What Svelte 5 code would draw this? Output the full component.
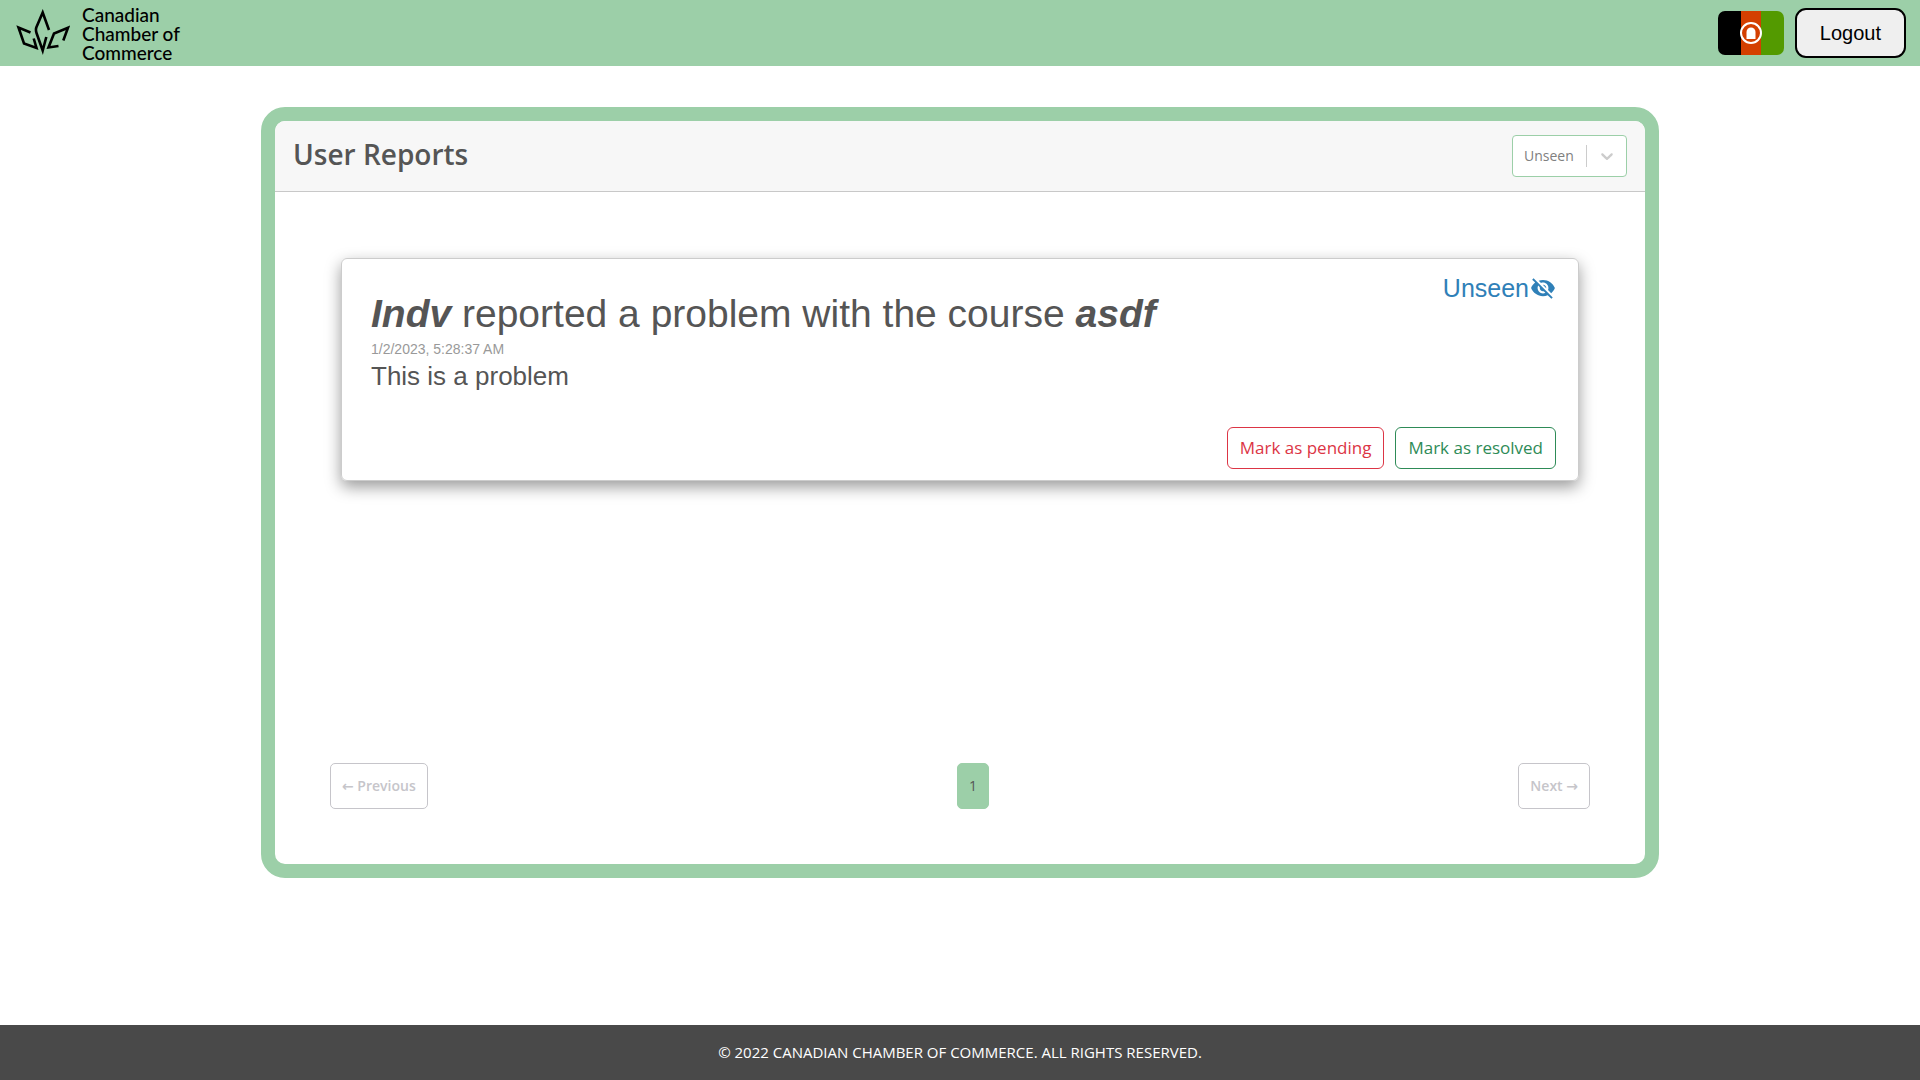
<script lang="ts">
  type Status = 'Unseen' | 'Pending' | 'Resolved';

  let filter = $state<Status>('Unseen');
  let page = $state(1);

  const statuses: Status[] = ['Unseen', 'Pending', 'Resolved'];
  const pages = [1];
  const report = {
    user: 'Indv',
    course: 'asdf',
    date: '1/2/2023, 5:28:37 AM',
    message: 'This is a problem',
    status: 'Unseen'
  };
</script>

<div class="app">
  <header class="topbar">
    <a class="brand" href="/">
      <svg class="leaf" viewBox="0 0 54 48" aria-hidden="true">
        <path d="M33 21 26.700 3.500 20.300 18.500Q19.500 21 20.500 24L26.700 41.500 30.300 28" />
        <path d="M14.500 23.500 2.500 18.500 8 34.500 20.500 39 17.700 29.500" />
        <path d="M47.300 31.500 52 18.700 38 24.500 32.500 38.500 42.500 37" />
      </svg>
      <span class="brand-name">Canadian<br />Chamber of<br />Commerce</span>
    </a>
    <div class="actions">
      <button class="language" type="button" aria-label="Language">
        <svg viewBox="0 0 66 44" aria-hidden="true">
          <path fill="#000" d="M0 0h23v44H0z" />
          <path fill="#d43f00" d="M23 0h20v44H23z" />
          <path fill="#539a00" d="M43 0h23v44H43z" />
          <circle cx="33" cy="22" r="10" fill="none" stroke="#fff" stroke-width="2" />
          <path fill="#fff" d="M28.500 28v-7a4.500 4.500 0 0 1 9 0v7z" />
        </svg>
      </button>
      <button class="logout" type="button">Logout</button>
    </div>
  </header>

  <main>
    <section class="panel">
      <div class="panel-head">
        <h1>User Reports</h1>
        <div class="filter">
          <select bind:value={filter} aria-label="Report status">
            {#each statuses as status}
              <option value={status}>{status}</option>
            {/each}
          </select>
          <span class="indicator" aria-hidden="true">
            <svg viewBox="0 0 20 20"><path d="M4.516 7.548c0.436-0.446 1.043-0.481 1.576 0l3.908 3.747 3.908-3.747c0.533-0.481 1.141-0.446 1.574 0 0.436 0.445 0.408 1.197 0 1.615-0.406 0.418-4.695 4.502-4.695 4.502-0.217 0.223-0.502 0.335-0.787 0.335s-0.570-0.112-0.789-0.335c0 0-4.287-4.084-4.695-4.502s-0.436-1.170 0-1.615z" /></svg>
          </span>
        </div>
      </div>

      <div class="panel-body">
        <article class="report">
          <div class="report-text">
            <h2><b>{report.user}</b> reported a problem with the course <b>{report.course}</b></h2>
            <time>{report.date}</time>
            <p>{report.message}</p>
          </div>
          <div class="status">
            <span>{report.status}</span>
            <svg viewBox="0 0 24 24" aria-hidden="true"><path d="M12 7c2.760 0 5 2.240 5 5 0 .65-.13 1.260-.36 1.830l2.920 2.920c1.510-1.260 2.700-2.890 3.430-4.750-1.730-4.390-6-7.500-11-7.500-1.400 0-2.740.25-3.980.7l2.160 2.160C10.740 7.130 11.350 7 12 7zM2 4.270l2.280 2.280.46.46C3.080 8.300 1.780 10.020 1 12c1.730 4.390 6 7.500 11 7.500 1.550 0 3.030-.3 4.380-.84l.42.42L19.730 22 21 20.730 3.270 3 2 4.270zM7.530 9.800l1.550 1.550c-.05.21-.08.43-.08.65 0 1.660 1.340 3 3 3 .22 0 .44-.03.65-.08l1.550 1.550c-.67.33-1.410.53-2.200.53-2.760 0-5-2.240-5-5 0-.79.2-1.530.53-2.200zm4.310-.78l3.150 3.150.02-.16c0-1.660-1.340-3-3-3l-.17.01z" /></svg>
          </div>
          <div class="report-actions">
            <button class="pending" type="button">Mark as pending</button>
            <button class="resolved" type="button">Mark as resolved</button>
          </div>
        </article>

        <nav class="pagination" aria-label="Pages">
          <button class="step" type="button" disabled><span class="arrow">←</span> Previous</button>
          <div class="pages">
            {#each pages as n}
              <button class="page" class:current={n === page} type="button" onclick={() => (page = n)}>{n}</button>
            {/each}
          </div>
          <button class="step" type="button" disabled>Next <span class="arrow">→</span></button>
        </nav>
      </div>
    </section>
  </main>

  <footer>© 2022 CANADIAN CHAMBER OF COMMERCE. ALL RIGHTS RESERVED.</footer>
</div>

<style>
  :global(body) {
    margin: 0;
    background: #fff;
  }

  .app {
    --green: #9ccfa8;
    --sans: 'Segoe UI', 'Open Sans', 'Noto Sans', sans-serif;
    --arial: Arial, 'Liberation Sans', sans-serif;
    display: flex;
    flex-direction: column;
    min-height: 100vh;
    color: #555;
    font-family: var(--sans);
  }

  .app :is(*, *::before) {
    box-sizing: border-box;
  }

  button {
    margin: 0;
    cursor: pointer;
  }

  .topbar {
    display: flex;
    align-items: center;
    justify-content: space-between;
    min-height: 66px;
    padding: 0 14px 0 16px;
    background: var(--green);
  }

  .brand {
    display: flex;
    align-items: center;
    gap: 12px;
    color: #000;
    text-decoration: none;
  }

  .leaf {
    width: 54px;
    height: 48px;
    fill: none;
    stroke: #000;
    stroke-width: 2.600;
  }

  .brand-name {
    font: 500 19px/19px Lato, sans-serif;
  }

  .actions {
    display: flex;
    align-items: center;
    gap: 11px;
  }

  .language {
    padding: 0;
    border: 0;
    border-radius: 7px;
    background: none;
    overflow: hidden;
  }

  .language svg {
    display: block;
    width: 66px;
    height: 44px;
  }

  .logout {
    height: 50px;
    padding: 0 23px;
    border: 2px solid #000;
    border-radius: 11px;
    background: #efefef;
    color: #000;
    font: 20px/24px var(--arial);
  }

  main {
    flex: 1;
    padding: 41px 24px;
  }

  .panel {
    display: flex;
    flex-direction: column;
    max-width: 1398px;
    min-height: 771px;
    margin: 0 auto;
    border: 14px solid var(--green);
    border-radius: 24px;
  }

  .panel-head {
    display: flex;
    align-items: flex-start;
    justify-content: space-between;
    padding: 14px 18px;
    border-bottom: 1px solid #c8c8c8;
    border-radius: 10px 10px 0 0;
    background: #f7f7f7;
  }

  h1 {
    margin: 0;
    font-size: 28px;
    font-weight: 600;
    line-height: 38px;
  }

  .filter {
    display: grid;
    align-items: center;
  }

  .filter select,
  .indicator {
    grid-area: 1 / 1;
  }

  .filter select {
    appearance: none;
    width: 115px;
    height: 42px;
    padding: 0 40px 0 11px;
    border: 1px solid var(--green);
    border-radius: 4px;
    background: #fff;
    color: #808080;
    font: 14px/20px var(--sans);
  }

  .indicator {
    display: flex;
    justify-self: end;
    padding: 1px 10px;
    border-left: 1px solid #ccc;
    pointer-events: none;
  }

  .indicator svg {
    width: 20px;
    height: 20px;
    fill: #ccc;
  }

  .panel-body {
    display: flex;
    flex: 1;
    flex-direction: column;
    justify-content: space-between;
    padding: 66px 55px 55px;
  }

  .report {
    display: grid;
    grid-template-columns: 1fr auto;
    margin: 0 11px;
    padding: 11px 22px 11px 29px;
    border: 1px solid #ccc;
    border-radius: 6px;
    box-shadow: 0 6px 16px rgba(0, 0, 0, 0.4);
    font-family: var(--arial);
  }

  .report-text {
    padding: 20px 0 35px;
  }

  h2 {
    margin: 0;
    font-size: 39px;
    font-weight: 400;
    line-height: 48px;
  }

  h2 b {
    font-style: italic;
  }

  time {
    display: block;
    color: #999;
    font-size: 14px;
    line-height: 22px;
  }

  p {
    margin: 0;
    font-size: 26px;
    line-height: 32px;
  }

  .status {
    display: flex;
    align-items: center;
    align-self: start;
    gap: 1px;
    color: #2f80b8;
    font-size: 25px;
    line-height: 36px;
  }

  .status svg {
    width: 26px;
    height: 26px;
    fill: currentColor;
  }

  .report-actions {
    grid-column: 1 / -1;
    display: flex;
    justify-content: flex-end;
    gap: 11px;
  }

  .report-actions button {
    height: 42px;
    padding: 0 12px;
    border: 1px solid currentColor;
    border-radius: 6px;
    background: #fff;
    font: 17px/26px var(--sans);
  }

  .report-actions .pending {
    color: #dc3545;
  }

  .report-actions .resolved {
    color: #2e8b57;
  }

  .pagination {
    display: flex;
    justify-content: space-between;
  }

  .pages {
    display: flex;
  }

  .step,
  .page {
    height: 46px;
    padding: 0 11px;
    border: 1px solid #c6c5ca;
    border-radius: 5px;
    background: #fff;
    color: #c6c5ca;
    font: 600 14px/20px var(--sans);
  }

  .step {
    cursor: default;
  }

  .arrow {
    font-family: 'DejaVu Sans', sans-serif;
  }

  .page {
    color: #555;
    font-weight: 400;
  }

  .page.current {
    border-color: var(--green);
    background: var(--green);
  }

  footer {
    padding: 16px;
    background: #494949;
    color: #fff;
    font-size: 15px;
    line-height: 23px;
    text-align: center;
  }
</style>
